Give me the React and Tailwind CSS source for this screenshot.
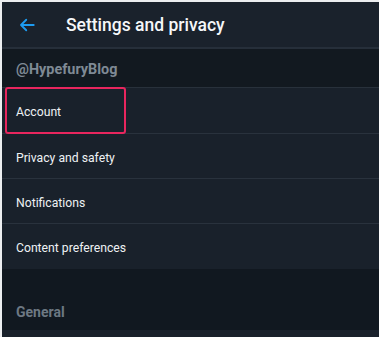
import React from 'react'

const rows = ['Account', 'Privacy and safety', 'Notifications', 'Content preferences']

const App = () => {
    return (
        <div className='w-[379px] h-[337px] overflow-hidden bg-[#111820] font-["Roboto",sans-serif] border-t-2 border-l-2 border-[#eceef0] flex flex-col'>
            <div className='h-[47px] shrink-0 bg-[#1a222c] flex items-center border-b-2 border-[#262f3a] pt-[1px]'>
                <svg className='ml-[16px] w-[18px] h-[18px]' viewBox='0 0 24 24' fill='none' stroke='#1d9bf0' strokeWidth='2.4' strokeLinecap='round' strokeLinejoin='round'>
                    <path d='M21 12H4M11 5l-7 7 7 7' />
                </svg>
                <h1 className='ml-[30px] text-[17.5px] font-medium text-[#f5f7f9]'>Settings and privacy</h1>
            </div>
            <div className='h-[39px] shrink-0 bg-[#121920] flex items-center pl-[14px] pt-[4px] border-b border-[#28313b]'>
                <span className='text-[14.4px] font-bold text-[#7f8a95]'>@HypefuryBlog</span>
            </div>
            <div className='bg-[#19212b] shrink-0'>
                {rows.map((r, i) => (
                    <div key={r} className={'relative flex items-center pl-[14px] pt-[4px] ' + (i === 0 ? 'h-[46px] ' : 'h-[45px] ') + (i < rows.length - 1 ? 'border-b border-[#29323d]' : '')}>
                        {i === 0 && (
                            <div className='absolute left-[3px] top-[-1px] w-[121px] h-[47px] border-2 border-[#e8265e] rounded-[3px]' />
                        )}
                        <span className='text-[12.2px] text-[#eef1f4]'>{r}</span>
                    </div>
                ))}
            </div>
            <div className='h-[61px] shrink-0 bg-[#111820] flex items-end pl-[14px] pb-[7px]'>
                <span className='text-[14px] font-bold text-[#6d7883]'>General</span>
            </div>
            <div className='flex-1 bg-[#19212b]' />
        </div>
    )
}

export default App
